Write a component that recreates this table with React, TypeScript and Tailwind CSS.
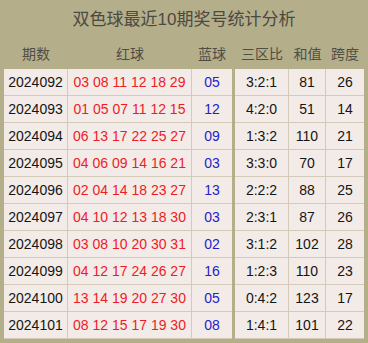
import React from 'react';

interface Row {
  issue: string;
  red: string;
  blue: string;
  zone: string;
  sum: string;
  span: string;
}

const rows: Row[] = [
  { issue: '2024092', red: '03 08 11 12 18 29', blue: '05', zone: '3:2:1', sum: '81', span: '26' },
  { issue: '2024093', red: '01 05 07 11 12 15', blue: '12', zone: '4:2:0', sum: '51', span: '14' },
  { issue: '2024094', red: '06 13 17 22 25 27', blue: '09', zone: '1:3:2', sum: '110', span: '21' },
  { issue: '2024095', red: '04 06 09 14 16 21', blue: '03', zone: '3:3:0', sum: '70', span: '17' },
  { issue: '2024096', red: '02 04 14 18 23 27', blue: '13', zone: '2:2:2', sum: '88', span: '25' },
  { issue: '2024097', red: '04 10 12 13 18 30', blue: '03', zone: '2:3:1', sum: '87', span: '26' },
  { issue: '2024098', red: '03 08 10 20 30 31', blue: '02', zone: '3:1:2', sum: '102', span: '28' },
  { issue: '2024099', red: '04 12 17 24 26 27', blue: '16', zone: '1:2:3', sum: '110', span: '23' },
  { issue: '2024100', red: '13 14 19 20 27 30', blue: '05', zone: '0:4:2', sum: '123', span: '17' },
  { issue: '2024101', red: '08 12 15 17 19 30', blue: '08', zone: '1:4:1', sum: '101', span: '22' },
];

const cols = 'grid grid-cols-[64px_124px_40px_3px_54px_37px_38px]';
const cell = 'flex items-center justify-center bg-[#f2ebe8] border-b border-[#d4cab9]';

const App = () => {
  return (
    <div
      className="w-[368px] h-[343px] bg-[#b4ae8b] text-[14px]"
      style={{ fontFamily: '"Liberation Sans", Arial, "Noto Sans CJK SC", sans-serif' }}
    >
      <div className="h-[40px] flex items-center justify-center text-[17px] text-[#4a4a42]">
        双色球最近10期奖号统计分析
      </div>

      <div className={`${cols} h-[29px] px-[4px] text-[#4e4e46]`}>
        <div className="flex items-center justify-center">期数</div>
        <div className="flex items-center justify-center">红球</div>
        <div className="flex items-center justify-center">蓝球</div>
        <div />
        <div className="flex items-center justify-center">三区比</div>
        <div className="flex items-center justify-center">和值</div>
        <div className="flex items-center justify-center">跨度</div>
      </div>

      <div className="px-[4px]">
        {rows.map((r) => (
          <div key={r.issue} className={`${cols} h-[27px]`}>
            <div className={`${cell} border-r text-[#151515]`}>{r.issue}</div>
            <div className={`${cell} border-r text-[#ee1c25]`}>{r.red}</div>
            <div className={`${cell} text-[#1f22c8]`}>{r.blue}</div>
            <div />
            <div className={`${cell} border-r text-[#151515]`}>{r.zone}</div>
            <div className={`${cell} border-r text-[#151515]`}>{r.sum}</div>
            <div className={`${cell} text-[#151515]`}>{r.span}</div>
          </div>
        ))}
      </div>
    </div>
  );
};

export default App;
